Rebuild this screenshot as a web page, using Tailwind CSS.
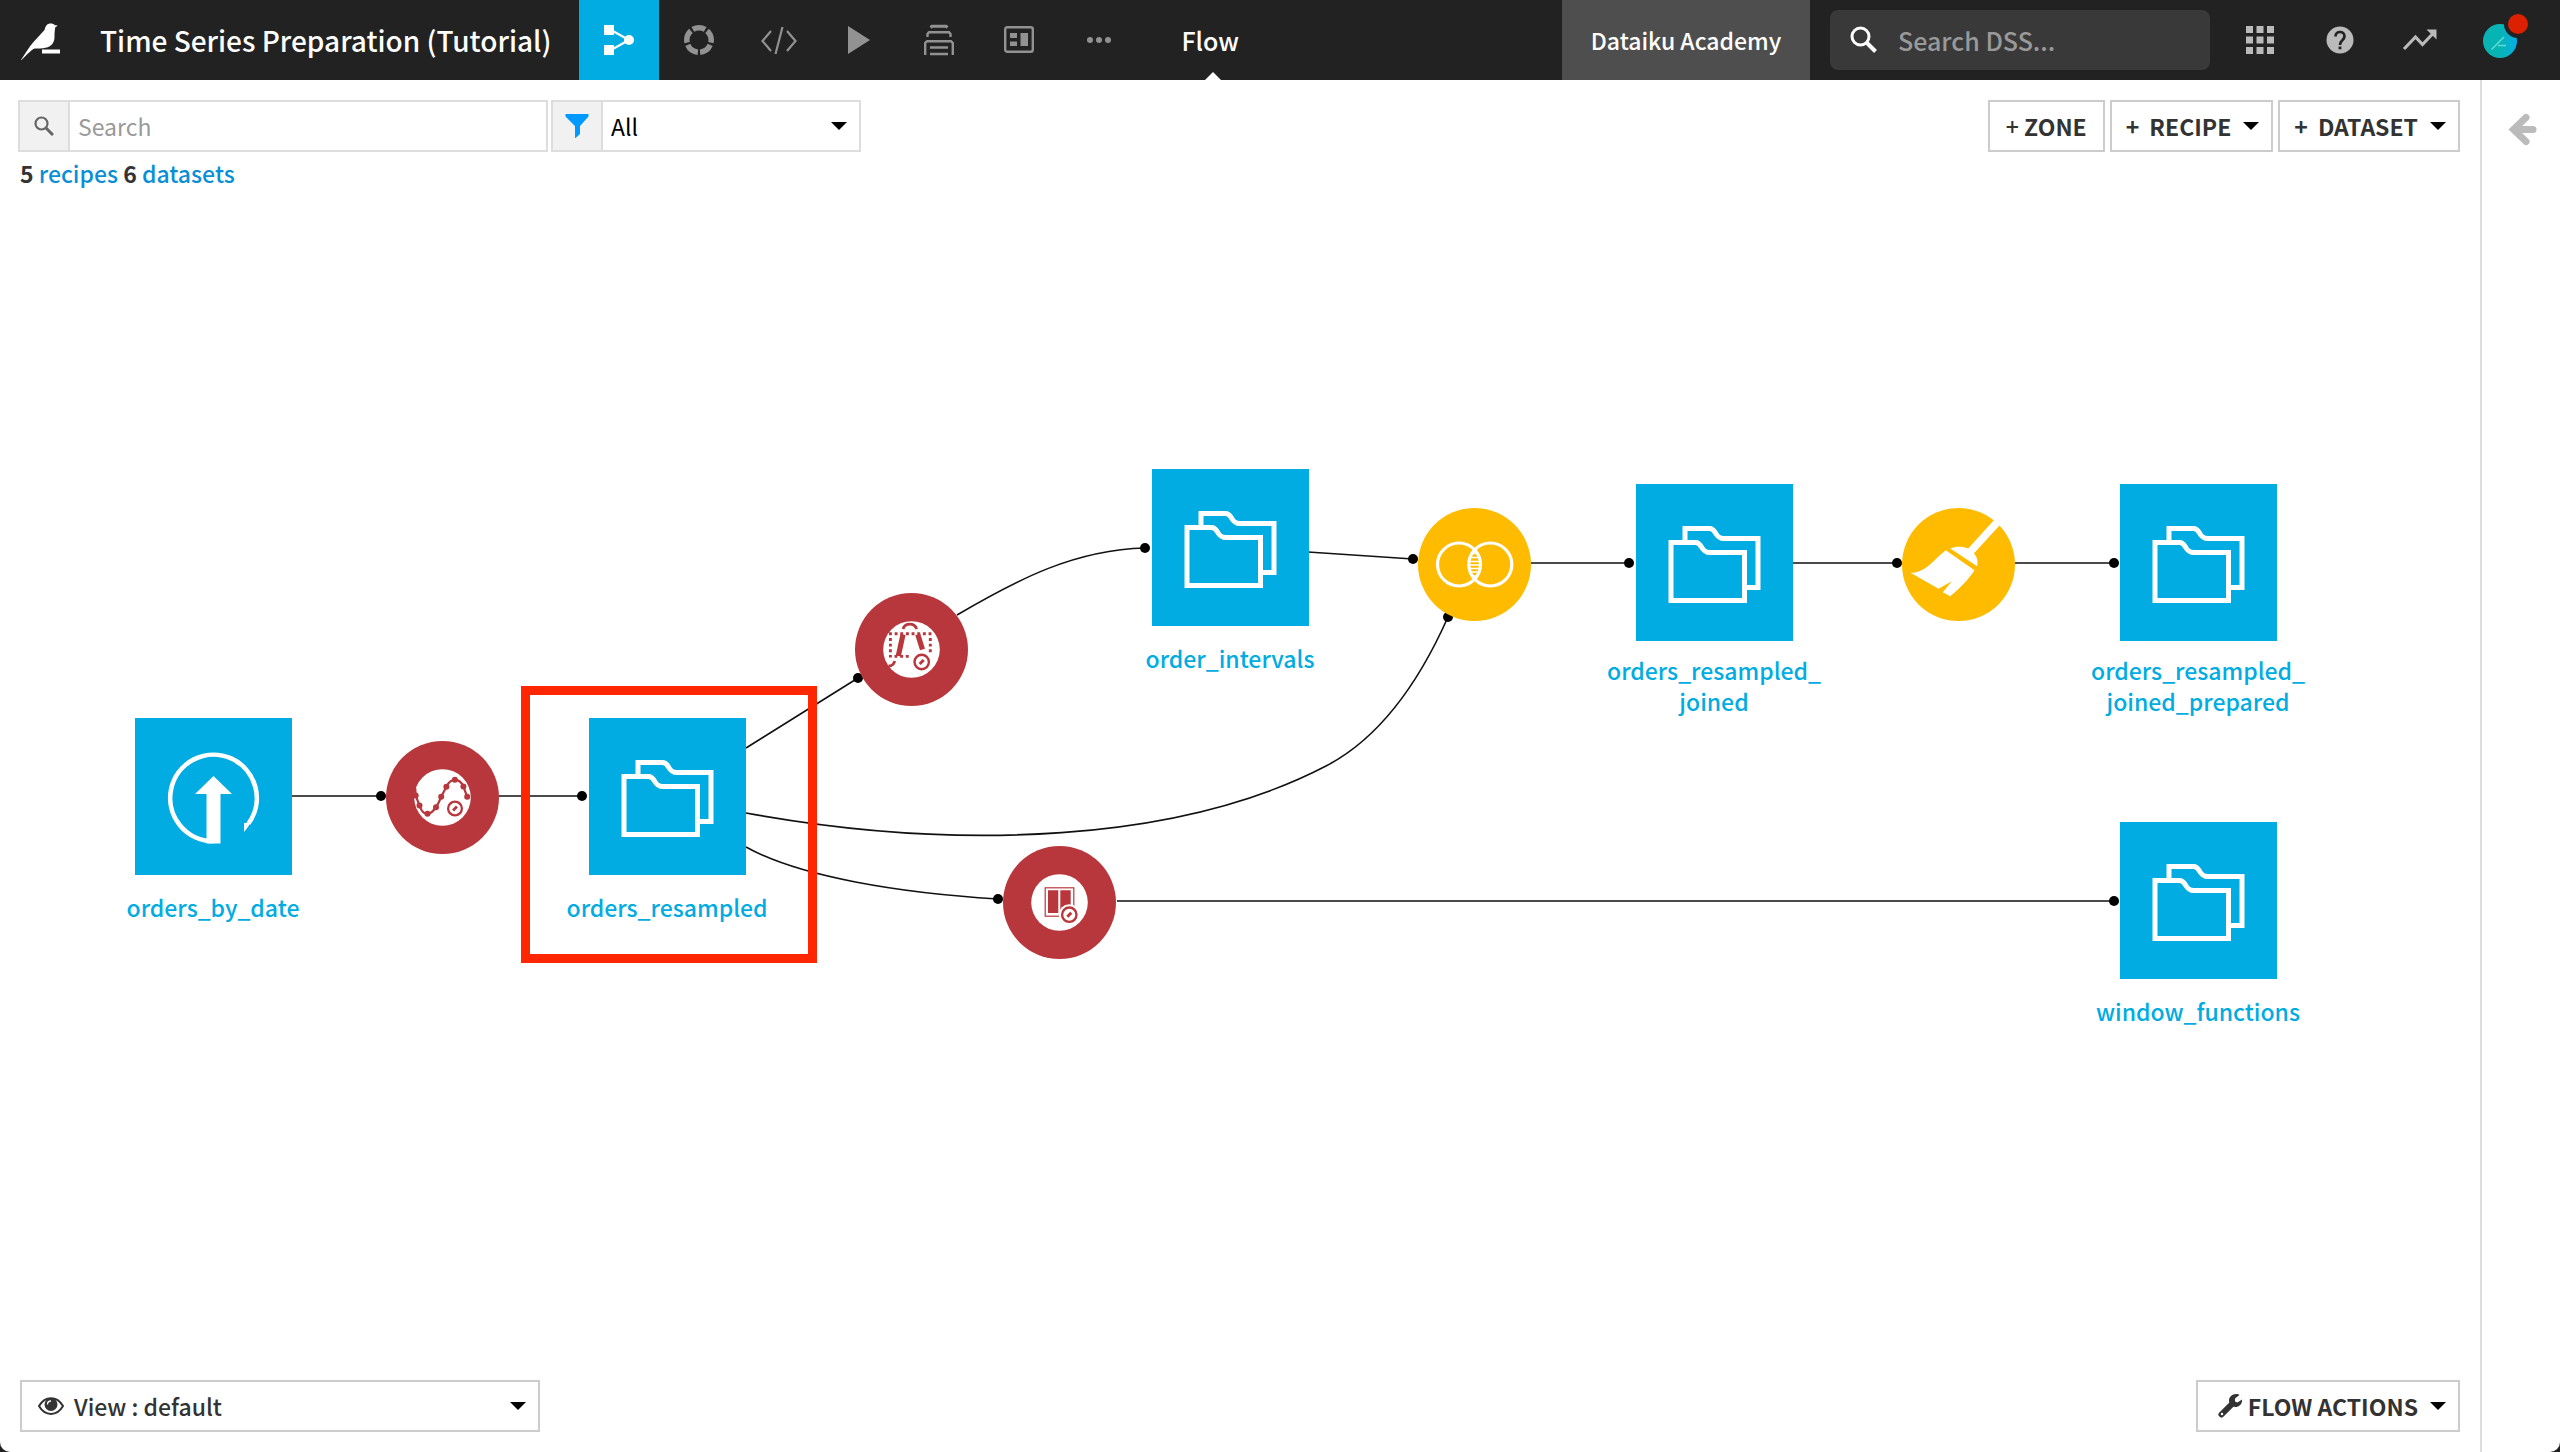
<!DOCTYPE html>
<html lang="en">
<head>
<meta charset="utf-8">
<meta name="viewport" content="width=device-width, initial-scale=1">
<title>Time Series Preparation (Tutorial) - Flow</title>
<script src="https://cdn.jsdelivr.net/npm/@tailwindcss/browser@4"></script>
</head>
<body class="flex min-h-screen flex-col bg-[#222] font-['Noto_Sans_CJK_SC',sans-serif] text-[23px] leading-[31px] font-medium text-[#333]">

<!-- Shared symbols -->
<svg class="hidden" aria-hidden="true">
  <symbol id="folder" viewBox="0 0 157 157">
    <g fill="none" stroke="#fff" stroke-width="5">
      <path d="M49 58V44.5H73.500C81 44.500 78 54.500 88 54.500H122V103.500H109"/>
      <path d="M35 58.500H59.500C67 58.500 64 68.500 74 68.500H108.500V116.500H35Z"/>
    </g>
  </symbol>
  <symbol id="clock" viewBox="0 0 22 22">
    <circle cx="11" cy="11" r="10.500" fill="#fff"/>
    <circle cx="11" cy="11" r="7.200" fill="none" stroke="#b8373c" stroke-width="2.400"/>
    <path d="M9 13l4-4" stroke="#b8373c" stroke-width="3"/>
  </symbol>
  <symbol id="caret" viewBox="0 0 16 8"><path d="M0 0h16L8 8z" fill="#000"/></symbol>
</svg>

<header class="flex h-20 items-stretch bg-[#222] text-white">
  <a href="#" aria-label="Home" class="flex w-[100px] items-center pl-5">
    <svg class="size-10" viewBox="0 0 40 40" fill="#fff">
      <path d="M0 41.500C5 34 9 27 13.500 22L24.500 10C25.500 5.500 27.500 3.500 30.500 3.500C32.500 3.500 34 4 35 5.200L37.800 5.600L35.200 7.500C34.700 11 34.500 13 34.500 17C34.500 24 30 27.500 23 28.200L19.500 28.600H14.500C12 29.500 6 35.500 0 41.500Z"/>
      <path d="M22 29.500H40V33.500H22z"/>
    </svg>
  </a>
  <a href="#" class="flex items-center pr-7 text-[28px]">Time Series Preparation (Tutorial)</a>
  <nav class="flex text-[#929292]" aria-label="Project sections">
    <a href="#" aria-label="Flow" class="flex w-20 items-center justify-center bg-[#00ace1] text-white">
      <svg class="size-8" viewBox="0 0 32 32" fill="currentColor"><path d="M1 1h10v10H1zM1 21h10v10H1z"/><circle cx="26" cy="16" r="5"/><path d="M8 6L26 16L8 26" fill="none" stroke="currentColor" stroke-width="2.200"/></svg>
    </a>
    <a href="#" aria-label="Lab" class="flex w-20 items-center justify-center">
      <svg class="size-8" viewBox="0 0 32 32" fill="none" stroke="currentColor" stroke-width="5.500"><circle cx="16" cy="16" r="12.200" pathLength="60" stroke-dasharray="10.200 1.800" stroke-dashoffset="-3.900"/></svg>
    </a>
    <a href="#" aria-label="Code" class="flex w-20 items-center justify-center">
      <svg class="h-8 w-9" viewBox="0 0 36 32" fill="none" stroke="currentColor" stroke-width="2.200"><path d="M10 7L1.500 17L10 27M26 7L34.500 17L26 27M21.500 3L14.500 30"/></svg>
    </a>
    <a href="#" aria-label="Jobs" class="flex w-20 items-center justify-center">
      <svg class="size-8" viewBox="0 0 32 32" fill="currentColor"><path d="M5 2L27 16L5 30z"/></svg>
    </a>
    <a href="#" aria-label="Automation" class="flex w-20 items-center justify-center">
      <svg class="size-8" viewBox="0 0 32 32" fill="none" stroke="currentColor" stroke-width="2.400"><path d="M7.500 3.500L9 2.200H23L24.500 3.500" stroke-width="3"/><path d="M4.500 13V10L6 8.200H26L27.500 10V13M2.200 31V19L4 17.200H28L29.800 19V31M7 23.500H25M7 30H25"/></svg>
    </a>
    <a href="#" aria-label="Dashboards" class="flex w-20 items-center justify-center">
      <svg class="size-8" viewBox="0 0 32 32" fill="none" stroke="currentColor" stroke-width="2.400"><rect x="2.200" y="3.200" width="27.600" height="24.600" rx="2"/><path d="M7 9h7v5H7zM7 17.500h7v4.500H7zM17.500 9h7.500v13h-7.500z" fill="currentColor" stroke="none"/></svg>
    </a>
    <a href="#" aria-label="More" class="flex w-20 items-center justify-center">
      <svg class="h-8 w-6" viewBox="0 0 24 32" fill="currentColor"><circle cx="3" cy="16" r="3"/><circle cx="12" cy="16" r="3"/><circle cx="21" cy="16" r="3"/></svg>
    </a>
  </nav>
  <div class="relative ml-[42px] flex items-center text-[25px]">Flow
    <svg class="absolute bottom-0 left-6 h-2 w-4" viewBox="0 0 16 8"><path d="M0 8h16L8 0z" fill="#fff"/></svg>
  </div>
  <div class="ml-auto flex w-[248px] items-center justify-center bg-[#4e4e4e] text-[23px]">Dataiku Academy</div>
  <label class="my-[10px] mr-[10px] ml-5 flex w-[380px] items-center gap-5 rounded-lg bg-[#393939] pl-5">
    <svg class="size-7" viewBox="0 0 28 28" fill="none" stroke="#fff" stroke-width="3"><circle cx="10.500" cy="10.500" r="8.500"/><path d="M16.500 16.500L25.500 25.500" stroke-width="4"/></svg>
    <input type="search" aria-label="Search DSS" placeholder="Search DSS..." class="min-w-0 flex-1 bg-transparent text-[25px] outline-none placeholder:text-[#999]">
  </label>
  <div class="flex items-center pr-5 text-[#bababa]">
    <a href="#" aria-label="Applications" class="flex w-20 justify-center"><svg class="size-7" viewBox="0 0 28 28" fill="currentColor"><path d="M0 0h7v7H0zM10.500 0h7v7h-7zM21 0h7v7h-7zM0 10.500h7v7H0zM10.500 10.500h7v7h-7zM21 10.500h7v7h-7zM0 21h7v7H0zM10.500 21h7v7h-7zM21 21h7v7h-7z"/></svg></a>
    <a href="#" aria-label="Help" class="flex w-20 justify-center"><svg class="size-7" viewBox="0 0 28 28"><circle cx="14" cy="14" r="13.500" fill="currentColor"/><path d="M9.500 10.500C9.500 4.500 18.500 4.500 18.500 10.500C18.500 14 14 14 14 19" fill="none" stroke="#222" stroke-width="2.700"/><path d="M12.600 20.500h2.800v2.800h-2.800z" fill="#222"/></svg></a>
    <a href="#" aria-label="Activity" class="flex w-20 justify-center"><svg class="h-6 w-9" viewBox="0 0 36 24"><path d="M2 21L13.500 9L20.500 16.500L31 5.500" fill="none" stroke="currentColor" stroke-width="3.200"/><path d="M24.500 1.500h10v10z" fill="currentColor"/></svg></a>
    <a href="#" aria-label="Profile, new notification" class="flex w-20 justify-center"><svg class="h-[50px] w-12 overflow-visible" viewBox="0 0 48 50">
      <defs><linearGradient id="av"><stop offset=".5" stop-color="#08b3b4"/><stop offset="1" stop-color="#04aee6"/></linearGradient></defs>
      <circle cx="24" cy="26" r="17" fill="url(#av)"/><path d="M15.500 34.500L28 22M22 30.500h8" stroke="#5fdcd5" stroke-width="1.500"/>
      <circle cx="42" cy="9" r="14" fill="#222"/><circle cx="42" cy="9" r="10" fill="#dc2000"/></svg></a>
  </div>
</header>

<div class="flex flex-1 overflow-hidden rounded-b-[10px] bg-white">
  <main class="flex min-w-0 flex-1 flex-col">
    <div class="flex items-start gap-[3px] pt-5 pr-5 pl-[18px]">
      <label class="flex h-[52px] w-[530px] border-2 border-[#ddd]">
        <span class="flex w-[50px] items-center justify-center border-r-2 border-[#ddd] bg-[#f1f1f1]"><svg class="size-5" viewBox="0 0 20 20" fill="none" stroke="#666" stroke-width="2.200"><circle cx="7.500" cy="7.500" r="6"/><path d="M12 12L19 19" stroke-width="3"/></svg></span>
        <input type="text" aria-label="Search the flow" placeholder="Search" class="min-w-0 flex-1 px-2 font-normal outline-none placeholder:text-[#999]">
      </label>
      <label class="relative flex h-[52px] w-[310px] border-2 border-[#ddd]">
        <span class="flex w-[50px] items-center justify-center border-r-2 border-[#ddd] bg-[#f1f1f1]"><svg class="size-6" viewBox="0 0 24 24" fill="#0099ff"><path d="M.5 0h23v2.500L15 12v8l-5 4.500V12L.5 2.500z"/></svg></span>
        <select aria-label="Filter by type" class="flex-1 appearance-none px-2 font-normal text-black outline-none"><option>All</option></select>
        <svg class="absolute top-5 right-3 h-2 w-4"><use href="#caret"/></svg>
      </label>
      <div class="ml-auto flex gap-[5px] font-bold">
        <button class="h-[52px] border-2 border-[#ccc] px-4"><span class="font-medium">+</span> ZONE</button>
        <button class="flex h-[52px] items-center gap-3 border-2 border-[#ccc] pr-3 pl-[14px]"><span class="flex gap-[10px]"><span>+</span> RECIPE</span><svg class="h-2 w-4"><use href="#caret"/></svg></button>
        <button class="flex h-[52px] items-center gap-3 border-2 border-[#ccc] pr-3 pl-[14px]"><span class="flex gap-[10px]"><span>+</span> DATASET</span><svg class="h-2 w-4"><use href="#caret"/></svg></button>
      </div>
    </div>
    <p class="h-12 pt-[6px] pl-5"><b>5</b> <a href="#" class="text-[#0a8fd6]">recipes</a> <b>6</b> <a href="#" class="text-[#0a8fd6]">datasets</a></p>

    <!-- Flow canvas: nodes are placed freely -->
    <section class="relative min-h-[900px] flex-1" aria-label="Flow">
      <svg class="absolute top-0 left-0 h-[1180px] w-[2480px]" viewBox="0 200 2480 1180" aria-hidden="true">
        <g fill="none" stroke="#111" stroke-width="1.600">
          <path d="M292 796H381M499 796H582M1531 563H1629M1793 563H1897M2015 563H2114M1117 901H2114"/>
          <path d="M746 748L858 678M957 615C1020 578 1075 550 1145 548M1308 552L1413 559"/>
          <path d="M746 813C960 852 1180 842 1326 766C1380 738 1420 680 1448 617"/>
          <path d="M746 847C800 877 900 893 998 899"/>
        </g>
        <g fill="#000">
          <circle cx="381" cy="796" r="5"/><circle cx="582" cy="796" r="5"/><circle cx="858" cy="678" r="5"/><circle cx="1145" cy="548" r="5"/><circle cx="1413" cy="559" r="5"/><circle cx="1448" cy="617" r="5"/><circle cx="1629" cy="563" r="5"/><circle cx="1897" cy="563" r="5"/><circle cx="2114" cy="563" r="5"/><circle cx="998" cy="899" r="5"/><circle cx="2114" cy="901" r="5"/>
        </g>
      </svg>

      <!-- Datasets -->
      <a href="#" class="absolute top-[518px] left-[93px] flex w-[240px] flex-col items-center gap-[17px] text-center text-[#00ace1]">
        <svg class="size-[157px] bg-[#00ace1]" viewBox="0 0 157 157"><path d="M78.500 123.300A43.300 43.300 0 1 1 113.500 105.500" fill="none" stroke="#fff" stroke-width="4.600"/><path d="M109 105L115.800 104.500Q113 109.500 109 114z" fill="#fff"/><path d="M78.500 58L97 76H85.500V125.500H71.500V76H60z" fill="#fff"/></svg>
        orders_by_date</a>
      <a href="#" class="absolute top-[518px] left-[547px] flex w-[240px] flex-col items-center gap-[17px] text-center text-[#00ace1]">
        <svg class="size-[157px] bg-[#00ace1]"><use href="#folder"/></svg>orders_resampled</a>
      <a href="#" class="absolute top-[269px] left-[1110px] flex w-[240px] flex-col items-center gap-[17px] text-center text-[#00ace1]">
        <svg class="size-[157px] bg-[#00ace1]"><use href="#folder"/></svg>order_intervals</a>
      <a href="#" class="absolute top-[284px] left-[1594px] flex w-[240px] flex-col items-center gap-[14px] text-center text-[#00ace1]">
        <svg class="size-[157px] bg-[#00ace1]"><use href="#folder"/></svg><span>orders_resampled_<br>joined</span></a>
      <a href="#" class="absolute top-[284px] left-[2078px] flex w-[240px] flex-col items-center gap-[14px] text-center text-[#00ace1]">
        <svg class="size-[157px] bg-[#00ace1]"><use href="#folder"/></svg><span>orders_resampled_<br>joined_prepared</span></a>
      <a href="#" class="absolute top-[622px] left-[2078px] flex w-[240px] flex-col items-center gap-[17px] text-center text-[#00ace1]">
        <svg class="size-[157px] bg-[#00ace1]"><use href="#folder"/></svg>window_functions</a>

      <!-- Recipes -->
      <a href="#" aria-label="Resampling recipe" class="absolute top-[541px] left-[386px]"><svg class="size-[113px]" viewBox="0 0 113 113">
        <circle cx="56.500" cy="56.500" r="56.500" fill="#b8373c"/><circle cx="56.500" cy="56.500" r="28.300" fill="#fff"/>
        <path d="M29.200 47L29.700 54.500L33.500 64.500C36 72 39 73 41.500 72.800C46 72.500 48 69 50 66.200C53 62 54 58 55.200 55.800L60.400 45.800C63 40 66 38.800 68.900 38.800C73 38.800 76 42 77.400 45.500L81.200 55.800" fill="none" stroke="#b8373c" stroke-width="2.200"/>
        <g fill="#b8373c"><circle cx="29.700" cy="54.500" r="3"/><circle cx="33.500" cy="64.500" r="3"/><circle cx="41.500" cy="72.800" r="3"/><circle cx="50" cy="66.200" r="3"/><circle cx="55.200" cy="55.800" r="3"/><circle cx="60.400" cy="45.800" r="3"/><circle cx="68.900" cy="38.800" r="3"/><circle cx="77.400" cy="45.500" r="3"/><circle cx="81.200" cy="55.800" r="3"/></g>
        <use href="#clock" x="58.500" y="57" width="21" height="21"/></svg></a>
      <a href="#" aria-label="Interval extraction recipe" class="absolute top-[393px] left-[855px]"><svg class="size-[113px]" viewBox="0 0 113 113">
        <circle cx="56.500" cy="56.500" r="56.500" fill="#b8373c"/><circle cx="56.500" cy="56.500" r="28.300" fill="#fff"/>
        <g fill="none" stroke="#b8373c"><path d="M34 40.700H77M35.400 45V64.500M75.300 45V60M39.500 63.400H55" stroke-width="2.900" stroke-dasharray="2.900 2.750"/>
        <path d="M48 36C50 29.500 59.500 29.500 61.700 36M39.700 68C39 71 37 73 33.500 73" stroke-width="2.800"/><path d="M48 41.500L43.300 63M62.800 41.500L67.500 56.500" stroke-width="5.200"/></g>
        <use href="#clock" x="55.700" y="58" width="22" height="22"/></svg></a>
      <a href="#" aria-label="Windowing recipe" class="absolute top-[646px] left-[1003px]"><svg class="size-[113px]" viewBox="0 0 113 113">
        <circle cx="56.500" cy="56.500" r="56.500" fill="#b8373c"/><circle cx="56.500" cy="56.500" r="28.300" fill="#fff"/>
        <rect x="42.200" y="41.800" width="28.600" height="28.400" fill="none" stroke="#b8373c" stroke-width="1.200"/><path d="M45 44.300H55.300V67H45zM57.300 44.300H67.700V67H57.300z" fill="#b8373c"/>
        <use href="#clock" x="55.300" y="57.700" width="22" height="22"/></svg></a>
      <a href="#" aria-label="Join recipe" class="absolute top-[308px] left-[1418px]"><svg class="size-[113px]" viewBox="0 0 113 113">
        <circle cx="56.500" cy="56.500" r="56.500" fill="#ffbb00"/>
        <g fill="none" stroke="#fff"><circle cx="41" cy="56.500" r="21.500" stroke-width="3.200"/><circle cx="72.300" cy="56.500" r="21.500" stroke-width="3.200"/>
        <path d="M54 45.500H59M53 49.500H60.500M52 53.500H61.500M51.500 57H62M52 60.500H61.500M53 64H60.500M54 68H59" stroke-width="1.400"/></g></svg></a>
      <a href="#" aria-label="Prepare recipe" class="absolute top-[308px] left-[1902px]"><svg class="size-[113px]" viewBox="0 0 113 113">
        <circle cx="56.500" cy="56.500" r="56.500" fill="#ffbb00"/>
        <g fill="#fff"><path d="M91.800 12.200L94 9L101 14L97.500 17.500L71.800 45.500C75.500 49 76 53 75.200 58.200L48.200 40.500C54 38 60 38 66.200 40.500z"/><path d="M43.800 42.200L72.500 62.200C67 71 58 80 48.200 88.200L40.800 84.200L49.800 73.200L36.500 80.800L8.500 64.800C24 65 32 51 43.800 42.200z"/></g></svg></a>

      <!-- Highlight frame around the selected dataset -->
      <div class="pointer-events-none absolute top-[486px] left-[521px] h-[277px] w-[296px] border-[9px] border-[#ff2600]"></div>
    </section>

    <div class="flex justify-between px-5 pb-5">
      <button class="flex h-[52px] w-[520px] items-center border-2 border-[#ccc] px-4">
        <svg class="mr-[10px] h-5 w-[26px]" viewBox="0 0 26 20"><path d="M1 10C7 -.5 19 -.5 25 10C19 20.500 7 20.500 1 10z" fill="none" stroke="#333" stroke-width="2"/><circle cx="13" cy="8.500" r="6.500" fill="#333"/><path d="M9.500 8.500C9.500 6 11 5 13 5" fill="none" stroke="#fff" stroke-width="1.300"/></svg>
        View : default
        <svg class="-mr-[4px] ml-auto h-2 w-4"><use href="#caret"/></svg>
      </button>
      <button class="flex h-[52px] items-center border-2 border-[#ccc] pr-3 pl-5 font-bold">
        <svg class="mr-[6px] size-6" viewBox="0 0 24 24"><path d="M3.500 20.500L13 11" stroke="#333" stroke-width="6" stroke-linecap="round"/><path d="M18 0C20 0 21 .5 21.500 1L17 4.500V7.500L19.500 8.500L24 5.500C24.500 9.500 21.500 13 17.500 13C13.500 13 11 10 11 6.500C11 3 14 0 18 0z" fill="#333"/><circle cx="4" cy="20" r="1.200" fill="#fff"/></svg>
        FLOW ACTIONS
        <svg class="ml-3 h-2 w-4"><use href="#caret"/></svg>
      </button>
    </div>
  </main>
  <aside class="w-20 border-l-2 border-[#ddd]">
    <button aria-label="Open the side panel" class="mt-8 ml-[26px] block"><svg class="h-9 w-[30px]" viewBox="0 0 30 36" fill="none" stroke="#bbb" stroke-width="8"><path d="M18 5.500L5.500 17.500L18 29.500M7 17.500H25" stroke-linecap="round" stroke-width="7"/></svg></button>
  </aside>
</div>
</body>
</html>
